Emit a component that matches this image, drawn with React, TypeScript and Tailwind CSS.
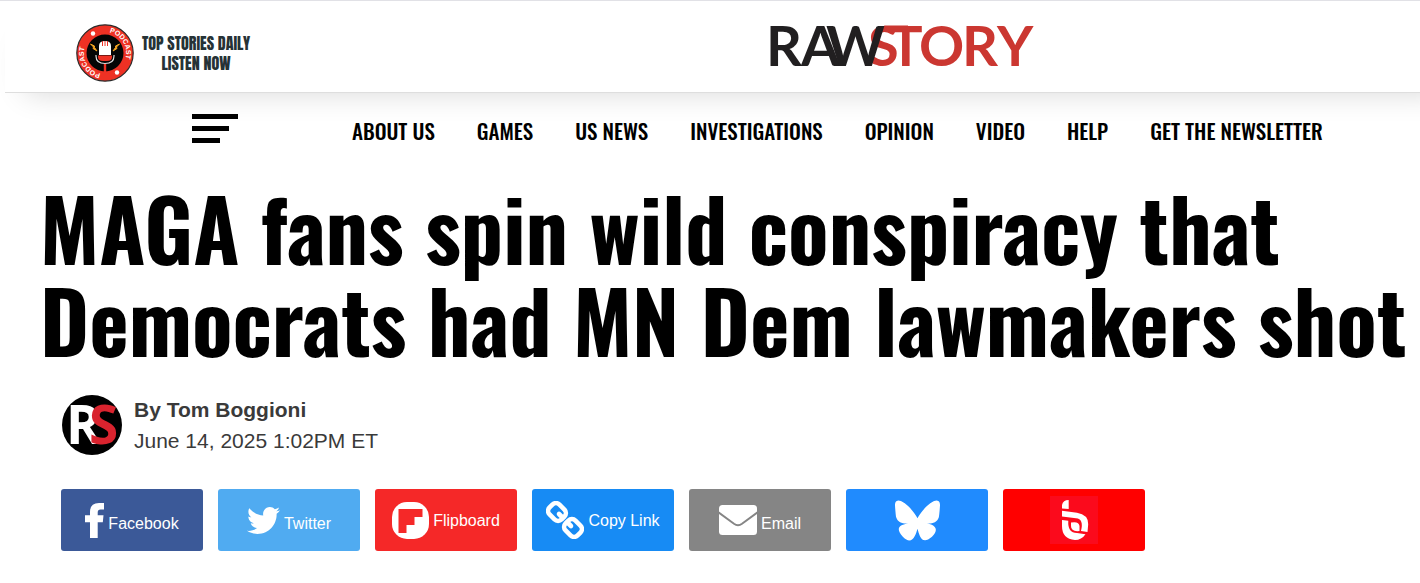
import type { ReactNode } from "react";
import { FaTwitter } from "react-icons/fa";
import { FaBluesky } from "react-icons/fa6";

const navItems = [
  "ABOUT US",
  "GAMES",
  "US NEWS",
  "INVESTIGATIONS",
  "OPINION",
  "VIDEO",
  "HELP",
  "GET THE NEWSLETTER",
];

function PodcastBadge() {
  return (
    <svg viewBox="0 0 58 58" className="size-[58px] shrink-0 overflow-visible" aria-hidden="true">
      <circle cx="29" cy="29" r="28.2" fill="#ee3124" stroke="#2b2b2b" strokeWidth="1.2" />
      <circle cx="29" cy="29" r="18.5" fill="#050505" />
      <path id="arc-top" d="M33.500 8.500A21 21 0 0 1 46 41.500" fill="none" />
      <path id="arc-bottom" d="M24.500 49.500A21 21 0 0 1 12 16.500" fill="none" />
      <g fill="#fff" fontFamily="Liberation Sans, sans-serif" fontWeight="700" fontSize="7">
        <text>
          <textPath href="#arc-top">PODCAST</textPath>
        </text>
        <text>
          <textPath href="#arc-bottom">PODCAST</textPath>
        </text>
      </g>
      <circle cx="17" cy="9.5" r="2.2" fill="#fff" />
      <circle cx="41" cy="48.5" r="2.2" fill="#fff" />
      <path d="M23 31v-9q0-5 6-5t6 5v9z" fill="#fff" />
      <path d="M26.500 17v5M29 17v5M31.500 17v5" stroke="#ee3124" strokeWidth="1" />
      <path d="M22 31.500h14v1.500q0 4-5 4h-4q-5 0-5-4z" fill="#ee3124" />
      <path d="M20 31v1q0 7.500 9 7.500t9-7.500v-1" fill="none" stroke="#ddd" strokeWidth="1.200" />
      <path d="M29 40v9" stroke="#ee3124" strokeWidth="2.400" />
      <path d="M14.500 20l4 2v1.500l2.500 3.500-4-2.500.5-1.500z" fill="#f5a623" stroke="#f5a623" strokeWidth="1" />
      <path d="M43.500 20l-4 2v1.500l-2.500 3.500 4-2.500-.5-1.500z" fill="#f5a623" stroke="#f5a623" strokeWidth="1" />
    </svg>
  );
}

function Wordmark() {
  return (
    <svg viewBox="0 -14 276 78" className="h-[78px] w-[276px] overflow-visible" role="img" aria-label="Raw Story">
      <g fontFamily="Lato, sans-serif" fontSize="56" fontWeight="700">
        <text x="98 119 149 192 227" y="44" fill="#cb3731">STORY</text>
        <path d="M114 3.600h24v4h-21z" fill="#cb3731" />
        <text x="-4 31 56" y="44" fill="#211f20">RAW</text>
      </g>
    </svg>
  );
}

function Avatar() {
  return (
    <svg viewBox="0 0 60 60" className="size-[60px] shrink-0 overflow-visible" aria-hidden="true">
      <circle cx="30" cy="30" r="30" fill="#000" />
      <g fontFamily="Open Sans, sans-serif" fontWeight="700" fontSize="53">
        <text x="4" y="49" fill="#fff">R</text>
        <text x="27" y="49" fill="#d9232e">S</text>
      </g>
    </svg>
  );
}

function FacebookIcon() {
  return (
    <svg viewBox="0 0 19 35" className="h-[35px] w-[19px]" aria-hidden="true">
      <path
        d="M5 35V19.300H0v-7h5V9Q5 0 14 0h5v6.500h-3.500q-2.800 0-2.800 3v2.800h5.800l-.7 7h-5.100V35z"
        fill="#fff"
      />
    </svg>
  );
}

function FlipboardIcon() {
  return (
    <svg viewBox="0 0 37 37" className="size-[37px]" aria-hidden="true">
      <rect width="37" height="37" rx="15" fill="#fff" />
      <path d="M6.500 7h24v8h-8v8h-8v8h-8z" fill="#f52828" />
    </svg>
  );
}

function ChainIcon() {
  return (
    <svg viewBox="0 0 38 38" className="size-[38px]" aria-hidden="true">
      <g fill="none" stroke="#fff" strokeWidth="4.600">
        <rect x="2.500" y="4" width="17" height="14" rx="5" transform="rotate(45 11 11)" />
        <rect x="18.500" y="20" width="17" height="14" rx="5" transform="rotate(45 27 27)" />
        <path d="M13 13l3.500 3.500M21.500 21.500l3.500 3.500" strokeLinecap="round" />
      </g>
    </svg>
  );
}

function EnvelopeIcon() {
  return (
    <svg viewBox="0 0 38 30" className="h-[30px] w-[38px]" aria-hidden="true">
      <rect width="38" height="30" rx="3.500" fill="#fff" />
      <path d="M-1 7L15 18.800q4 2.800 8 0L39 7" fill="none" stroke="#858585" strokeWidth="2" />
    </svg>
  );
}

function NewsBreakIcon() {
  return (
    <svg viewBox="0 0 48 48" className="size-[48px]" aria-hidden="true">
      <rect width="48" height="48" fill="#fb0a1c" />
      <path d="M12 12.500V9q1-5 6.700-5v9z" fill="#fff" />
      <path d="M12 14.700l15 2q11.500 2 11.200 11.500l-.7 7.800-6.500-1q3-12-5-12.700L12 20.500z" fill="#fff" />
      <path d="M12 24l6.300.8Q17.500 37 27 37l8.500 1.200Q31.500 44 25 44 12 43 12 30z" fill="#fff" />
      <path d="M21 26.500q8-1.500 8.500 3.500v5q-8.500 1-8.500-5z" fill="#fff" />
    </svg>
  );
}

type Share = { label: string; text?: string; color: string; low?: boolean; icon: ReactNode };

const shares: Share[] = [
  { label: "Facebook", text: "Facebook", color: "bg-[#3b5998]", low: true, icon: <FacebookIcon /> },
  { label: "Twitter", text: "Twitter", color: "bg-[#50abf1]", low: true, icon: <FaTwitter className="size-[33px]" /> },
  { label: "Flipboard", text: "Flipboard", color: "bg-[#f52828]", icon: <FlipboardIcon /> },
  { label: "Copy Link", text: "Copy Link", color: "bg-[#178bf4]", icon: <ChainIcon /> },
  { label: "Email", text: "Email", color: "bg-[#858585]", low: true, icon: <EnvelopeIcon /> },
  { label: "Bluesky", color: "bg-[#208bfe]", icon: <FaBluesky className="size-[45px]" /> },
  { label: "NewsBreak", color: "bg-[#ff0000]", icon: <NewsBreakIcon /> },
];

export default function App() {
  return (
    <div className="min-h-screen overflow-x-clip border-t border-[#e1e1e6] bg-white font-['Liberation_Sans',sans-serif] text-black">
      <header className="-mr-10 ml-[5px] flex h-[92px] items-center border-b border-[#dedede] bg-white pr-10 pl-[71px] shadow-[0_20px_30px_-20px_rgba(0,0,0,0.16)]">
        <a href="#podcast" className="mt-3 flex items-center gap-[6px]">
          <PodcastBadge />
          <span className="w-[112px] text-center font-['Anton','Oswald',sans-serif] text-[16px] leading-[20px] whitespace-nowrap text-[#263236]">
            TOP STORIES DAILY
            <br />
            LISTEN NOW
          </span>
        </a>
        <a href="#home" className="ml-[518px]">
          <Wordmark />
        </a>
      </header>

      <nav aria-label="Main" className="flex h-[76px] items-center pl-[192px]">
        <button type="button" aria-label="Open menu" className="-mt-[6px] mr-[114px] flex w-[46px] shrink-0 flex-col gap-[7px]">
          <span className="h-[5px] w-[46px] bg-black" />
          <span className="h-[5px] w-[37px] bg-black" />
          <span className="h-[5px] w-[28px] bg-black" />
        </button>
        <ul className="flex gap-[42px] font-['Oswald',sans-serif] text-[21px] leading-[30px] font-medium whitespace-nowrap">
          {navItems.map((item) => (
            <li key={item}>
              <a href="#section">{item}</a>
            </li>
          ))}
        </ul>
      </nav>

      <main>
        <h1 className="pt-[12px] pl-[40px] font-['Oswald',sans-serif] text-[84px] leading-[92px] font-bold whitespace-nowrap">
          MAGA fans spin wild conspiracy that
          <br />
          Democrats had MN Dem lawmakers shot
        </h1>

        <div className="mt-[29px] flex items-center gap-[12px] pl-[62px] text-[21px] leading-[31px] text-[#3a3a3a]">
          <Avatar />
          <div>
            <p className="font-bold">By Tom Boggioni</p>
            <p>June 14, 2025 1:02PM ET</p>
          </div>
        </div>

        <div className="mt-[33px] flex flex-wrap gap-[15px] pl-[61px] text-[16px] text-white">
          {shares.map(({ label, text, color, low, icon }) => (
            <button
              key={label}
              type="button"
              aria-label={label}
              className={`flex h-[62px] w-[142px] items-center justify-center gap-1 rounded-[3px] ${color}`}
            >
              {icon}
              {text && <span className={low ? "pt-2" : "pt-[2px]"}>{text}</span>}
            </button>
          ))}
        </div>
      </main>
    </div>
  );
}
